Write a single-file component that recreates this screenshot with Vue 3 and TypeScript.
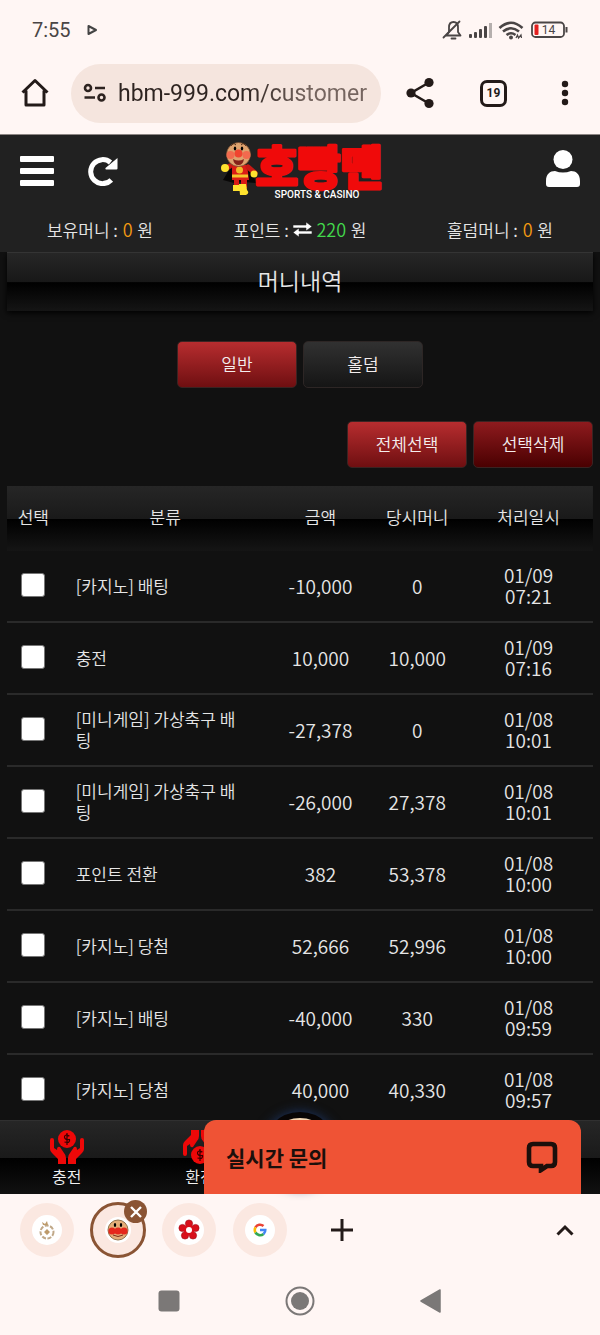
<script setup lang="ts">
import { ref } from 'vue'

interface Entry {
  kind: string
  amount: string
  balance: string
  day: string
  time: string
}

const entries: Entry[] = [
  { kind: '[카지노] 배팅', amount: '-10,000', balance: '0', day: '01/09', time: '07:21' },
  { kind: '충전', amount: '10,000', balance: '10,000', day: '01/09', time: '07:16' },
  { kind: '[미니게임] 가상축구 배팅', amount: '-27,378', balance: '0', day: '01/08', time: '10:01' },
  { kind: '[미니게임] 가상축구 배팅', amount: '-26,000', balance: '27,378', day: '01/08', time: '10:01' },
  { kind: '포인트 전환', amount: '382', balance: '53,378', day: '01/08', time: '10:00' },
  { kind: '[카지노] 당첨', amount: '52,666', balance: '52,996', day: '01/08', time: '10:00' },
  { kind: '[카지노] 배팅', amount: '-40,000', balance: '330', day: '01/08', time: '09:59' },
  { kind: '[카지노] 당첨', amount: '40,000', balance: '40,330', day: '01/08', time: '09:57' },
]

const address = ref('hbm-999.com/customer')
const checked = ref<boolean[]>(entries.map(() => false))
const selectAll = () => {
  checked.value = entries.map(() => true)
}
</script>

<template>
  <div class="phone">
    <div class="status">
      <span class="clock">7:55</span>
      <svg class="play" width="12" height="12" viewBox="0 0 12 12"><path d="M2.500 2v8L10 6z" fill="#fff6f4" stroke="#444" stroke-width="2" stroke-linejoin="round" /></svg>
      <svg class="signals" width="128" height="24" viewBox="0 0 128 24">
        <g fill="none" stroke="#4a4545" stroke-width="1.800" stroke-linecap="round">
          <path d="M5.500 17.500h14l-2.500-3.500V9.500c0-3.500-2-5.500-4.500-5.500S8 6 8 9.500V14z" stroke-linejoin="round" />
          <path d="M2.500 19.500L18.500 3.500M10.500 20.500h4" />
        </g>
        <g fill="#4a4545">
          <rect x="28" y="16" width="3" height="4" rx="1" /><rect x="33" y="14" width="3" height="6" rx="1" /><rect x="38" y="11" width="3" height="9" rx="1" /><rect x="43" y="8" width="3" height="12" rx="1" /><rect x="48" y="5" width="3" height="15" fill="#b5afad" />
        </g>
        <g fill="none" stroke="#4a4545" stroke-width="2.600">
          <path d="M58.500 10Q70 -.5 81.500 10M62 13.500q8-6.500 16 0M65.500 17q4.500-3.500 9 0" />
        </g>
        <circle cx="70" cy="19.500" r="2" fill="#4a4545" />
        <path d="M75 20l1.500-3 1 3 2.500-3 .5 3" fill="none" stroke="#4a4545" stroke-width="1.200" />
        <rect x="91" y="4.500" width="32" height="14.500" rx="3.500" fill="none" stroke="#4a4545" stroke-width="1.800" />
        <rect x="93.500" y="6.500" width="4" height="10.500" rx="1" fill="#e3201f" />
        <path d="M125.500 9v5.500" stroke="#4a4545" stroke-width="2" />
        <text x="107.500" y="16.300" font-size="12" text-anchor="middle" fill="#4a4545">14</text>
      </svg>
    </div>

    <div class="browser">
      <button class="plain" aria-label="home">
        <svg width="30" height="30" viewBox="0 0 30 30"><path d="M2.500 14.500L15 2.500l12.500 12M6 12.500V27h18V12.500" fill="none" stroke="#231a18" stroke-width="3" stroke-linejoin="round" /></svg>
      </button>
      <label class="address">
        <svg width="24" height="22" viewBox="0 0 24 22" fill="none" stroke="#2d2320" stroke-width="2.600"><circle cx="5" cy="6" r="3" /><path d="M12 6h10M1.500 15.500H12" /><circle cx="18.500" cy="15.500" r="3" /></svg>
        <input v-model="address" type="text" aria-label="address" />
      </label>
      <button class="plain share" aria-label="share">
        <svg width="30" height="32" viewBox="0 0 30 32" fill="#231a18"><path d="M24 5.500L6 16l18 10.500" fill="none" stroke="#231a18" stroke-width="2.600" /><circle cx="24" cy="5.500" r="4.600" /><circle cx="6" cy="16" r="4.600" /><circle cx="24" cy="26.500" r="4.600" /></svg>
      </button>
      <button class="plain tabs-count"><span>19</span></button>
      <button class="plain more" aria-label="menu">
        <svg width="8" height="26" viewBox="0 0 8 26" fill="#231a18"><circle cx="4" cy="4" r="3.200" /><circle cx="4" cy="13" r="3.200" /><circle cx="4" cy="22" r="3.200" /></svg>
      </button>
    </div>

    <div class="site">
      <header class="head">
        <div class="head-row">
          <div class="left">
            <button class="plain" aria-label="menu"><svg width="34" height="30" viewBox="0 0 34 30" fill="#fff"><rect width="34" height="6" rx="1" /><rect y="12" width="34" height="6" rx="1" /><rect y="24" width="34" height="6" rx="1" /></svg></button>
            <button class="plain" aria-label="reload"><svg width="30" height="30" viewBox="0 0 30 30"><path d="M23.300 24A12 12 0 1 1 22.500 6.500" fill="none" stroke="#fff" stroke-width="5" /><path d="M29.500 2v10.500a1 1 0 0 1-1 1H18q-1-.5-.5-1.500z" fill="#fff" /></svg></button>
          </div>
          <a class="logo" href="#" aria-label="home">
            <svg width="172" height="60" viewBox="-6 0 172 60">
              <path d="M12 24L3 39l11 3 9-1 13 1-6-17z" fill="#080707" />
              <path d="M12 24h15l2 15H12z" fill="#db1c16" />
              <path d="M10 25L5 28M28 26l7 6" stroke="#c81914" stroke-width="5" stroke-linecap="round" />
              <path d="M12 35h16" stroke="#f4c62b" stroke-width="3" /><circle cx="19.500" cy="29" r="3.500" fill="#f2b928" />
              <path d="M14 39h5v7h-5zM21 39h6v8h-6z" fill="#d71a15" />
              <path d="M13 44h6l1 6h-7zM19 43h7l1 6q3 3-1 5h-6z" fill="#ffe22e" />
              <circle cx="5" cy="27" r="4" fill="#ffe22e" /><circle cx="34" cy="33" r="3.500" fill="#ffe22e" />
              <circle cx="18.500" cy="13.500" r="12" fill="#dea26e" stroke="#6b4226" stroke-width=".7" />
              <circle cx="10.500" cy="14" r="4" fill="#f26a4e" /><circle cx="26.500" cy="14" r="4" fill="#f26a4e" /><circle cx="18.500" cy="12.500" r="4" fill="#f0442f" />
              <path d="M13 18q5.500 3 11 0-1 6-5.500 6T13 18" fill="#83231a" />
              <ellipse cx="15" cy="7.500" rx="1.200" ry="2" /><ellipse cx="22" cy="7.500" rx="1.200" ry="2" /><path d="M11 5q2-4 5-1M21 4q3-3 5 1" fill="none" stroke="#4b2b19" />
              <text class="logo-name" x="99" y="43" text-anchor="middle">호빵맨</text>
              <text class="logo-sub" x="97" y="57" text-anchor="middle">SPORTS &amp; CASINO</text>
            </svg>
          </a>
          <button class="plain user" aria-label="account"><svg width="34" height="38" viewBox="0 0 34 38" fill="#fff"><circle cx="17" cy="9.500" r="9.500" /><path d="M3 37q-3 0-3-3v-3c0-7 4-10 9-10q8 3 16 0c5 0 9 3 9 10v3q0 3-3 3z" /></svg></button>
        </div>
        <div class="money">
          <span>보유머니 : <b class="gold">0</b> 원</span>
          <span>포인트 : <svg width="19" height="15" viewBox="0 0 19 15" fill="#fff"><path d="M0 3h13V0l6 4.500L13 9V6H0zM19 9H6V6L0 10.500 6 15v-3h13z" stroke="#212121" stroke-width=".6" /></svg> <b class="green">220</b> 원</span>
          <span>홀덤머니 : <b class="gold">0</b> 원</span>
        </div>
      </header>

      <main class="content">
        <h1>머니내역</h1>
        <div class="kinds">
          <button class="btn red">일반</button>
          <button class="btn dark">홀덤</button>
        </div>
        <div class="actions">
          <button class="btn red" @click="selectAll">전체선택</button>
          <button class="btn deep">선택삭제</button>
        </div>
        <table>
          <colgroup><col class="c-check" /><col class="c-kind" /><col class="c-amount" /><col class="c-balance" /><col class="c-date" /></colgroup>
          <thead>
            <tr><th>선택</th><th>분류</th><th>금액</th><th>당시머니</th><th>처리일시</th></tr>
          </thead>
          <tbody>
            <tr v-for="(e, i) in entries" :key="i">
              <td><input v-model="checked[i]" type="checkbox" :aria-label="e.kind" /></td>
              <td class="kind">{{ e.kind }}</td>
              <td class="num">{{ e.amount }}</td>
              <td class="num">{{ e.balance }}</td>
              <td class="num">{{ e.day }}<br />{{ e.time }}</td>
            </tr>
          </tbody>
        </table>
      </main>

      <div class="dock">
        <div class="medal"></div>
        <nav>
          <a href="#">
            <svg width="34" height="34" viewBox="0 0 34 34"><g fill="#ee0808"><circle cx="17" cy="9" r="9" /><path d="M0 10q0-2 2-2t2 2v8l3 2q0-4 3-3l4 6q2 2 2 5v6H8v-5L2 23q-2-2-2-4zM34 10q0-2-2-2t-2 2v8l-3 2q0-4-3-3l-4 6q-2 2-2 5v6h8v-5l6-6q2-2 2-4z" /></g><path d="M19.500 6q-5-2-5 1t5 2.500q1 4-5 2.500M17 3v12" fill="none" stroke="#300" stroke-width="1.200" /></svg>
            <span>충전</span>
          </a>
          <a href="#">
            <svg width="34" height="34" viewBox="0 0 34 34"><g fill="#ee0808" transform="rotate(180 17 17)"><circle cx="17" cy="9" r="9" /><path d="M0 10q0-2 2-2t2 2v8l3 2q0-4 3-3l4 6q2 2 2 5v6H8v-5L2 23q-2-2-2-4zM34 10q0-2-2-2t-2 2v8l-3 2q0-4-3-3l-4 6q-2 2-2 5v6h8v-5l6-6q2-2 2-4z" /></g><path d="M19.500 22q-5-2-5 1t5 2.500q1 4-5 2.500M17 19v12" fill="none" stroke="#300" stroke-width="1.200" /></svg>
            <span>환전</span>
          </a>
        </nav>
        <button class="chat">
          <span>실시간 문의</span>
          <svg width="32" height="32" viewBox="0 0 32 32"><path d="M7 3h18q4 0 4 4v14q0 4-4 4h-4l-6 4v-4H7q-4 0-4-4V7q0-4 4-4z" fill="none" stroke="#1c0f0b" stroke-width="4.600" /></svg>
        </button>
      </div>
    </div>

    <div class="tabstrip">
      <button class="tab" aria-label="tab 1"><svg width="30" height="30" viewBox="0 0 30 30"><circle cx="15" cy="15" r="15" fill="#fff" /><circle cx="15" cy="17" r="6.500" fill="none" stroke="#c0a888" stroke-width="2" stroke-dasharray="4 1.500" /><path d="M15 14l3 3-3 3-3-3zM10 7l3 2 2-3 1 4h-5z" fill="#bd9a6a" /></svg></button>
      <div class="active">
        <button class="tab current" aria-label="tab 2"><svg width="26" height="26" viewBox="2 2 26 26"><circle cx="15" cy="15" r="13" fill="#fff" /><circle cx="15" cy="15" r="10" fill="#e4ad78" stroke="#93724c" /><circle cx="9" cy="16" r="3.600" fill="#e5281d" /><circle cx="15" cy="16" r="3.600" fill="#e5281d" /><circle cx="21" cy="16" r="3.600" fill="#e5281d" /><ellipse cx="12" cy="10" rx="1.200" ry="2" /><ellipse cx="18" cy="10" rx="1.200" ry="2" /><path d="M10 20q5 3 10 0" fill="none" stroke="#7c2c1c" /></svg></button>
        <button class="close" aria-label="close tab"><svg width="12" height="12" viewBox="0 0 12 12"><path d="M1 1l10 10M11 1L1 11" stroke="#fff" stroke-width="2.400" /></svg></button>
      </div>
      <button class="tab" aria-label="tab 3"><svg width="30" height="30" viewBox="0 0 30 30"><circle cx="15" cy="15" r="15" fill="#fff" /><g fill="#d8101b" stroke="#9d0914" stroke-width=".6"><circle cx="15" cy="8.500" r="3.600" /><circle cx="21.500" cy="13" r="3.600" /><circle cx="19" cy="20.500" r="3.600" /><circle cx="11" cy="20.500" r="3.600" /><circle cx="8.500" cy="13" r="3.600" /></g><circle cx="15" cy="15" r="5.500" fill="#d8101b" /><circle cx="15" cy="15" r="3" fill="#fff" /></svg></button>
      <button class="tab" aria-label="tab 4"><svg width="30" height="30" viewBox="0 0 30 30"><circle cx="15" cy="15" r="15" fill="#fff" /><g fill="none" stroke-width="2.600"><path d="M18.500 11A5.300 5.300 0 0 0 10.500 12.300" stroke="#ea4335" /><path d="M10.500 12.300a5.300 5.300 0 0 0 0 5.200" stroke="#fbbc05" /><path d="M10.500 17.500a5.300 5.300 0 0 0 8 1.500" stroke="#34a853" /><path d="M18.500 19q2-2 1.800-4H15" stroke="#4285f4" /></g></svg></button>
      <button class="plain add" aria-label="new tab"><svg width="22" height="22" viewBox="0 0 22 22"><path d="M11 0v22M0 11h22" stroke="#231a18" stroke-width="3" /></svg></button>
      <button class="plain up" aria-label="expand"><svg width="18" height="12" viewBox="0 0 18 12"><path d="M1.500 10.500L9 3l7.500 7.500" fill="none" stroke="#231a18" stroke-width="3" /></svg></button>
    </div>

    <div class="system">
      <button class="plain" aria-label="recent"><svg width="22" height="22" viewBox="0 0 22 22"><rect x=".5" y=".5" width="21" height="21" rx="3" fill="#7b7877" /></svg></button>
      <button class="plain" aria-label="home screen"><svg width="30" height="30" viewBox="0 0 30 30"><circle cx="15" cy="15" r="13.500" fill="none" stroke="#7b7877" stroke-width="2" /><circle cx="15" cy="15" r="9" fill="#7b7877" /></svg></button>
      <button class="plain" aria-label="back"><svg width="22" height="26" viewBox="0 0 22 26"><path d="M1 13L20 2v22z" fill="#7b7877" stroke="#7b7877" stroke-width="1.500" stroke-linejoin="round" /></svg></button>
    </div>
  </div>
</template>

<style>
body {
  margin: 0;
  background: #fff6f4;
}
</style>

<style scoped>
* {
  box-sizing: border-box;
}
.phone {
  display: flex;
  flex-direction: column;
  height: 100vh;
  overflow: hidden;
  background: #fff6f4;
  font-family: "Noto Sans CJK KR", sans-serif;
  font-weight: 350;
}
svg {
  display: block;
}
button {
  font: inherit;
  cursor: pointer;
}
.plain {
  display: flex;
  padding: 0;
  border: 0;
  background: none;
}
.status {
  display: flex;
  align-items: center;
  flex: none;
  height: 60px;
  padding: 0 31px 0 32px;
  font-family: Roboto, sans-serif;
  font-weight: 400;
  color: #4a4545;
}
.clock {
  font-size: 20px;
}
.play {
  margin-left: 15px;
}
.signals {
  margin-left: auto;
}
.browser {
  display: flex;
  align-items: center;
  flex: none;
  height: 75px;
  padding: 0 31px 8px 20px;
  border-bottom: 1px solid #8c8583;
}
.address {
  display: flex;
  align-items: center;
  flex: 1;
  min-width: 0;
  height: 59px;
  margin-left: 21px;
  padding: 0 11px 0 12px;
  gap: 11px;
  border-radius: 30px;
  background: #f5e5de;
}
.address svg {
  flex: none;
}
.address input {
  flex: 1;
  min-width: 0;
  width: 0;
  padding: 0;
  border: 0;
  outline: 0;
  background: linear-gradient(90deg, #2d2320 50%, #75655f 75%);
  background-clip: text;
  color: transparent;
  font-family: Roboto, sans-serif;
  font-size: 23px;
}
.share {
  margin-left: 24px;
}
.tabs-count {
  margin-left: 45px;
}
.tabs-count span {
  width: 27px;
  height: 27px;
  border: 3px solid #231a18;
  border-radius: 7px;
  font: 700 12px/21px Roboto, sans-serif;
  text-align: center;
  color: #231a18;
}
.more {
  margin-left: 54px;
}
.site {
  display: flex;
  flex-direction: column;
  flex: 1;
  min-height: 0;
  background: #111;
  color: #e6e6e6;
  font-size: 17px;
}
.head {
  flex: none;
  height: 117px;
  background: #212121;
}
.head-row {
  display: grid;
  grid-template-columns: 1fr auto 1fr;
  align-items: center;
  height: 72px;
  padding: 0 20px;
}
.left {
  display: flex;
  gap: 34px;
}
.user {
  justify-self: end;
  padding-bottom: 5px;
}
.logo svg {
  overflow: visible;
}
.logo-name {
  font-family: "Noto Sans CJK KR", sans-serif;
  font-size: 46px;
  font-weight: 900;
  fill: #f00a0a;
  stroke: #f00a0a;
  stroke-width: 3;
  stroke-linejoin: round;
}
.logo-sub {
  font-family: Roboto, sans-serif;
  font-size: 10px;
  font-weight: 500;
  fill: #fff;
}
.money {
  display: grid;
  grid-template-columns: repeat(3, 1fr);
  line-height: 44px;
  text-align: center;
}
.money svg {
  display: inline-block;
}
.money b {
  margin: 0 1px;
  font-size: 18px;
  font-weight: 350;
}
.gold {
  color: #f39a12;
}
.green {
  color: #43d94c;
}
.content {
  flex: 1;
  min-height: 0;
  overflow: hidden;
  padding: 0 7px;
}
h1 {
  height: 59px;
  margin: 0;
  border-top: 1px solid #343434;
  background: linear-gradient(#262626, #181818 50%, #000 51%, #151515);
  box-shadow: 0 2px 6px #000;
  font-size: 23px;
  font-weight: 350;
  line-height: 55px;
  text-align: center;
}
.kinds,
.actions {
  display: flex;
  gap: 6px;
}
.kinds {
  justify-content: center;
  margin-top: 30px;
}
.actions {
  justify-content: flex-end;
  margin-top: 33px;
}
.btn {
  width: 120px;
  height: 47px;
  padding: 0 0 3px;
  border: 1px solid #3b2322;
  border-radius: 5px;
  color: #f4eeee;
}
.red {
  background: linear-gradient(#b72d2f, #6f0f11);
}
.dark {
  border-color: #2d2625;
  background: linear-gradient(#313131, #151515);
}
.deep {
  background: linear-gradient(#8e1b1e, #4a0001);
}
table {
  width: 100%;
  margin-top: 18px;
  border-spacing: 0;
  table-layout: fixed;
}
.c-check {
  width: 9%;
}
.c-kind {
  width: 36%;
}
.c-amount {
  width: 17%;
}
.c-balance {
  width: 16%;
}
.c-date {
  width: 22%;
}
thead tr {
  background: linear-gradient(#262626, #1a1a1a 50%, #000 51%, #151515);
}
th {
  height: 65px;
  padding: 0 0 4px;
  font-weight: 350;
}
td {
  height: 72px;
  padding: 0 0 2px;
  border-bottom: 2px solid #2a2a2a;
  line-height: 21px;
  text-align: center;
}
.num {
  font-size: 19px;
}
.kind {
  padding: 0 24px 2px 16px;
  text-align: left;
}
td input {
  appearance: none;
  display: block;
  width: 24px;
  height: 24px;
  margin: 0 auto;
  border: 1px solid #777;
  border-radius: 3px;
  background: #fff;
}
td input:checked {
  background: #b72d2f;
}
.dock {
  position: relative;
  flex: none;
}
.medal {
  position: absolute;
  left: 50%;
  top: -8px;
  width: 76px;
  height: 76px;
  margin-left: -38px;
  border: 6px solid #080505;
  border-radius: 50%;
  background: #f4d7b4;
  box-shadow: 0 0 12px #1c3564;
}
nav {
  position: relative;
  display: grid;
  grid-template-columns: 2fr 2fr 1fr 2fr 2fr;
  height: 74px;
  border-top: 1px solid #303030;
  background: linear-gradient(#262626, #1a1a1a 50%, #000 51%, #111);
}
nav a {
  display: flex;
  flex-direction: column;
  align-items: center;
  padding-top: 9px;
  color: #f2f2f2;
  font-size: 16px;
  line-height: 24px;
  text-decoration: none;
}
.chat {
  position: absolute;
  left: 34%;
  right: 19px;
  top: 0;
  bottom: 0;
  display: flex;
  align-items: center;
  justify-content: space-between;
  padding: 0 23px 0 22px;
  border: 0;
  border-radius: 12px 12px 0 0;
  background: #ef5335;
  color: #1c0f0b;
  font-size: 21px;
  font-weight: 700;
}
.tabstrip {
  display: flex;
  align-items: center;
  flex: none;
  height: 72px;
  padding: 0 26px 0 20px;
}
.tab {
  display: flex;
  align-items: center;
  justify-content: center;
  width: 54px;
  height: 54px;
  margin-right: 17px;
  padding: 0;
  border: 0;
  border-radius: 50%;
  background: #fbe8e1;
}
.active {
  position: relative;
  margin: 0 16px 0 -1px;
}
.current {
  width: 56px;
  height: 56px;
  margin: 0;
  border: 3px solid #8a5434;
}
.close {
  position: absolute;
  right: -1px;
  top: -2px;
  display: flex;
  align-items: center;
  justify-content: center;
  width: 23px;
  height: 23px;
  padding: 0;
  border: 0;
  border-radius: 50%;
  background: #8a5434;
}
.add {
  margin-left: 27px;
}
.up {
  margin-left: auto;
}
.system {
  display: flex;
  align-items: center;
  justify-content: center;
  flex: none;
  height: 69px;
  gap: 105px;
}
</style>
